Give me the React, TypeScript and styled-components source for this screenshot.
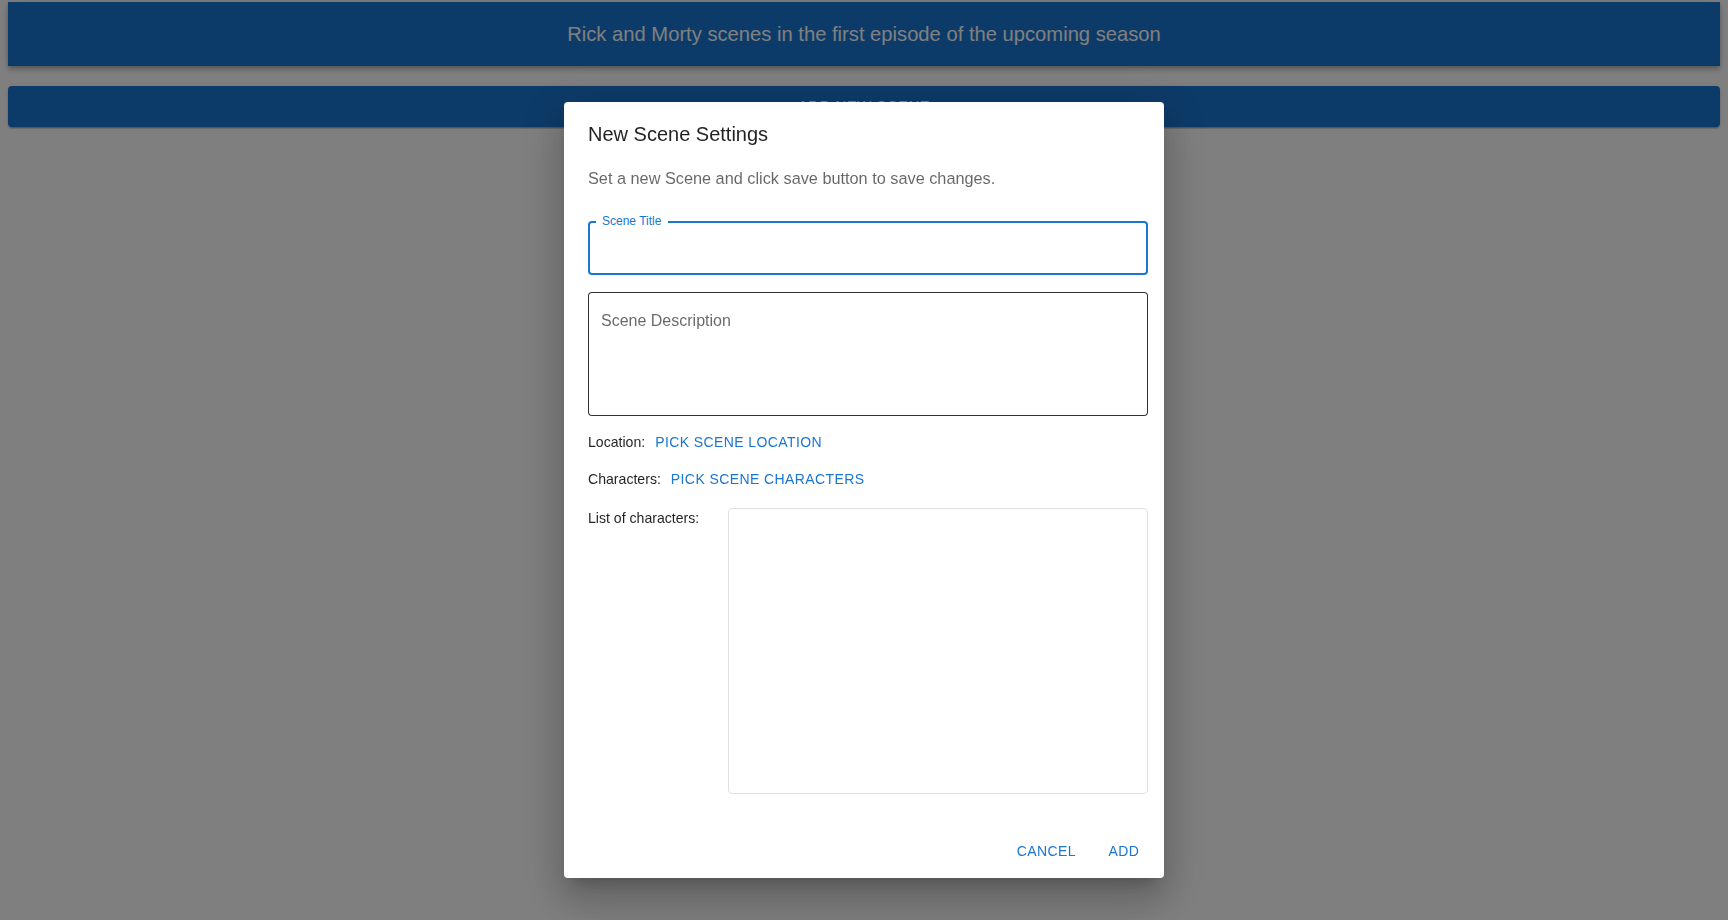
import React from "react";
import styled, { createGlobalStyle } from "styled-components";

const GlobalStyle = createGlobalStyle`
  body {
    margin: 0;
    background: #ffffff;
    font-family: "Liberation Sans", Arial, Helvetica, sans-serif;
  }
  * {
    box-sizing: border-box;
  }
`;

export default function App() {
  return (
    <>
      <GlobalStyle />
      <Page>
        <Header>Rick and Morty scenes in the first episode of the upcoming season</Header>
        <AddButton>Add new scene</AddButton>
      </Page>
      <Backdrop>
        <Dialog>
          <DialogTitle>New Scene Settings</DialogTitle>
          <DialogContent>
            <ContentText>Set a new Scene and click save button to save changes.</ContentText>
            <TitleField>
              <FieldLabel>Scene Title</FieldLabel>
              <TitleInput />
            </TitleField>
            <DescriptionArea placeholder="Scene Description" rows={4} />
            <PickGroup>
              <PickRow>
                <RowLabel>Location:</RowLabel>
                <TextButton>Pick scene location</TextButton>
              </PickRow>
              <PickRow>
                <RowLabel>Characters:</RowLabel>
                <TextButton>Pick scene characters</TextButton>
              </PickRow>
            </PickGroup>
            <ListRow>
              <RowLabel>List of characters:</RowLabel>
              <CharacterList />
            </ListRow>
          </DialogContent>
          <DialogActions>
            <TextButton $wide>Cancel</TextButton>
            <TextButton $wide>Add</TextButton>
          </DialogActions>
        </Dialog>
      </Backdrop>
    </>
  );
}

const Page = styled.div`
  padding: 2px 8px;
  display: flex;
  flex-direction: column;
  gap: 20px;
`;

const Header = styled.header`
  height: 64px;
  background-color: #1976d2;
  color: #ffffff;
  display: flex;
  align-items: center;
  justify-content: center;
  font-size: 20.2px;
  box-shadow: 0px 2px 4px -1px rgba(0, 0, 0, 0.2),
    0px 4px 5px 0px rgba(0, 0, 0, 0.14), 0px 1px 10px 0px rgba(0, 0, 0, 0.12);
`;

const AddButton = styled.button`
  width: 100%;
  height: 41px;
  padding: 0 0 3px;
  border: none;
  border-radius: 4px;
  background-color: #1976d2;
  color: #ffffff;
  font-family: inherit;
  font-size: 15px;
  font-weight: 500;
  letter-spacing: 0.46px;
  text-transform: uppercase;
  box-shadow: 0px 3px 1px -2px rgba(0, 0, 0, 0.2),
    0px 2px 2px 0px rgba(0, 0, 0, 0.14), 0px 1px 5px 0px rgba(0, 0, 0, 0.12);
`;

const Backdrop = styled.div`
  position: fixed;
  inset: 0;
  background-color: rgba(0, 0, 0, 0.5);
  display: flex;
  justify-content: center;
  align-items: flex-start;
  padding-top: 102px;
`;

const Dialog = styled.div`
  width: 600px;
  background-color: #ffffff;
  border-radius: 4px;
  display: flex;
  flex-direction: column;
  box-shadow: 0px 11px 15px -7px rgba(0, 0, 0, 0.2),
    0px 24px 38px 3px rgba(0, 0, 0, 0.14), 0px 9px 46px 8px rgba(0, 0, 0, 0.12);
`;

const DialogTitle = styled.h2`
  margin: 0;
  padding: 16px 24px;
  font-size: 20px;
  font-weight: 400;
  line-height: 32px;
  color: rgba(0, 0, 0, 0.87);
`;

const DialogContent = styled.div`
  padding: 0 16px 31px 24px;
  display: flex;
  flex-direction: column;
`;

const ContentText = styled.p`
  margin: 0;
  font-size: 16.3px;
  line-height: 24px;
  color: rgba(0, 0, 0, 0.6);
`;

const TitleField = styled.div`
  position: relative;
  margin-top: 31px;
  height: 54px;
  border: 2px solid #1976d2;
  border-radius: 4px;
`;

const FieldLabel = styled.span`
  position: absolute;
  top: -10px;
  left: 6px;
  padding: 0 7px 0 6px;
  background-color: #ffffff;
  color: #1976d2;
  font-size: 12px;
  line-height: 16px;
`;

const TitleInput = styled.input`
  width: 100%;
  height: 100%;
  border: none;
  outline: none;
  background: transparent;
  padding: 0 12px;
  font-family: inherit;
  font-size: 16px;
`;

const DescriptionArea = styled.textarea`
  margin-top: 17px;
  width: 100%;
  height: 124px;
  padding: 15.5px 12px;
  border: 1px solid rgba(0, 0, 0, 0.8);
  border-radius: 4px;
  resize: none;
  outline: none;
  font-family: inherit;
  font-size: 16px;
  line-height: 23px;
  color: rgba(0, 0, 0, 0.87);

  &::placeholder {
    color: rgba(0, 0, 0, 0.6);
    opacity: 1;
  }
`;

const PickGroup = styled.div`
  margin-top: 8px;
  display: flex;
  flex-direction: column;
`;

const PickRow = styled.div`
  display: flex;
  align-items: center;
  height: 36.5px;
`;

const RowLabel = styled.span`
  font-size: 14.1px;
  line-height: 20px;
  color: rgba(0, 0, 0, 0.87);
  margin-right: 2px;
`;

const TextButton = styled.button<{ $wide?: boolean }>`
  min-width: ${(p) => (p.$wide ? "64px" : "0")};
  padding: 6px 8px;
  border: none;
  border-radius: 4px;
  background: none;
  color: #1976d2;
  font-family: inherit;
  font-size: 14px;
  font-weight: 500;
  line-height: 24.5px;
  letter-spacing: 0.4px;
  text-transform: uppercase;
  cursor: pointer;
`;

const ListRow = styled.div`
  margin-top: 11px;
  display: grid;
  grid-template-columns: 140px 1fr;
  align-items: start;
`;

const CharacterList = styled.div`
  height: 286px;
  border: 1px solid #e0e0e0;
  border-radius: 4px;
`;

const DialogActions = styled.div`
  display: flex;
  justify-content: flex-end;
  gap: 8px;
  padding: 8px;
`;
